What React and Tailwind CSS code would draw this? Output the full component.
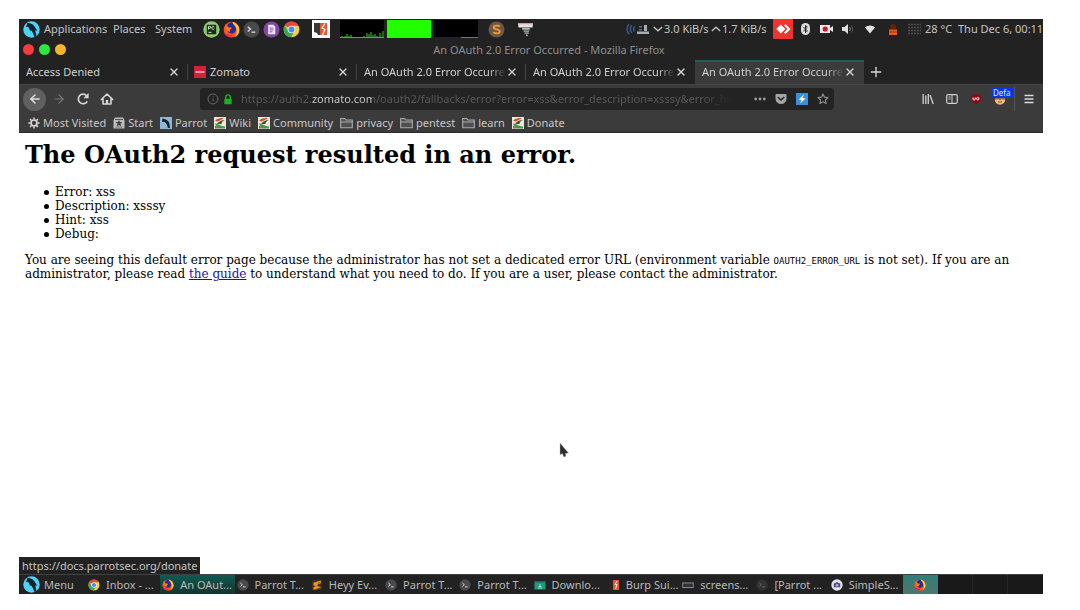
import React from "react";
import { ArrowLeft, ArrowRight, Bluetooth, Info, X, Plus } from "lucide-react";

const Parrot = ({ className }) => (
  <svg viewBox="0 0 18 18" className={className} aria-hidden="true">
    <circle cx="9" cy="9" r="8.7" fill="#4fd2f7" />
    <path d="M4.500 2C8.500 2 12 4 13.200 7.400l2 3-2.200-.6c.3 2 .8 4.200 1.400 6.200l-2.200 1C11 13.500 10 11 8.200 9.400L7.600 11C7.200 9 6.500 7.500 5.300 6L3 6.300C3.400 5 4.500 4 4.500 2Z" fill="#10222b" />
  </svg>
);

const PyCharm = ({ className }) => (
  <svg viewBox="0 0 18 18" className={className} aria-hidden="true">
    <circle cx="9" cy="9" r="8.700" fill="#8ccb6e" />
    <rect x="4" y="4" width="10" height="10" rx="1" fill="#1d2a1c" />
    <path d="M5.800 9V5.800h1.400a1 1 0 0 1 0 2H5.800M12 6.200c-1.800-1-3 .1-2.600 1.600.3 1.200 1.600 1.400 2.600.6M5.800 12H9" fill="none" stroke="#d9f2cf" strokeWidth="1" />
  </svg>
);

const Firefox = ({ className }) => (
  <svg viewBox="0 0 18 18" className={className} aria-hidden="true">
    <circle cx="9" cy="9.200" r="8.300" fill="#ff5420" />
    <path d="M9.500 1C13 .8 17.300 4.500 17.300 9.400c0 3.500-2 6.200-4.800 7.500 1.500-2 2.500-5 1.900-8-.5-2.600-2-3.600-3.200-5.200C10.300 2.700 9.700 1.800 9.500 1Z" fill="#ffc928" />
    <path d="M5 3.500C6.500 1.800 8.500 1.200 10 1.300c.3 2.200 3.500 3.700 3.800 7 .2 3-2 5-4.600 5C6.500 13.300 4.500 11.500 4.500 9c0-2 .3-3.500.5-5.500Z" fill="#252a9f" />
    <path d="M3 2.600C2.800 5 4 6.200 6 6.600l3.500.5-1 1.500C7.200 9 6.800 10.200 7.800 11c-1 .7-3 .3-4-1.500C2.500 7.500 2.200 4.500 3 2.600Z" fill="#ff7a1c" />
    <path d="M1 10.500c1.500 3.500 5 5 9.500 3.900-1.500 2-4 3-6.500 1.800C2.300 15 1.200 13 1 10.500Z" fill="#f21c48" />
  </svg>
);

const Terminal = ({ className }) => (
  <svg viewBox="0 0 18 18" className={className} aria-hidden="true">
    <circle cx="9" cy="9" r="8.500" fill="#4a4a4d" />
    <path d="M5 6l3 2.500L5 11" fill="none" stroke="#ddd" strokeWidth="1.400" />
    <path d="M9 11.800h4" stroke="#ddd" strokeWidth="1.400" />
  </svg>
);

const Notes = ({ className }) => (
  <svg viewBox="0 0 18 18" className={className} aria-hidden="true">
    <circle cx="9" cy="9" r="8.500" fill="#8148a5" />
    <path d="M5.500 4h5.500l2 2v8H5.500Z" fill="#efe6f5" />
    <path d="M7 7.500h4M7 9.500h4M7 11.500h3" stroke="#8148a5" />
  </svg>
);

const Chrome = ({ className }) => (
  <svg viewBox="0 0 18 18" className={className} aria-hidden="true">
    <circle cx="9" cy="9" r="8.300" fill="#f7cd3b" />
    <path d="M9 9 1.800 4.800A8.300 8.300 0 0 1 16.300 5H9Z" fill="#e2483b" />
    <path d="M1.800 4.800A8.300 8.300 0 0 0 8.600 17.300L12 11 5.600 10.500Z" fill="#3aa757" />
    <circle cx="9" cy="9" r="4" fill="#f2f2f2" />
    <circle cx="9" cy="9" r="3.100" fill="#4a8af4" />
  </svg>
);

const Burp = ({ className }) => (
  <svg viewBox="0 0 18 18" className={className} aria-hidden="true">
    <path fill="#fff" d="M0 0h18v18H0z" />
    <path fill="#3a3a3c" d="M2 3h6v12H6l-1-2-3-1Z" />
    <path fill="#e8552e" d="M8 3h7v12H8z" />
    <path d="M13 3.500 10 8l3 1.500L10.500 15" fill="none" stroke="#fff" strokeWidth="1.200" />
  </svg>
);

const BurpSmall = ({ className }) => (
  <svg viewBox="0 0 12 12" className={className} aria-hidden="true">
    <path fill="#2b2424" d="M1 1h5v10H1z" />
    <path fill="#f0502f" d="M5 1h6v10H5z" />
    <path d="M9 2 7 5.500h2L7.500 10" fill="none" stroke="#fff" strokeWidth="1" />
  </svg>
);

const SublimeRound = ({ className }) => (
  <svg viewBox="0 0 18 18" className={className} aria-hidden="true">
    <circle cx="9" cy="9" r="8.500" fill="#6c5846" />
    <path d="M12.600 5.800C11 4.500 6 4.300 6 6.800c0 2.600 6.500 1.600 6.500 4.300 0 2.600-5 2.300-6.900.8" fill="none" stroke="#f59a35" strokeWidth="1.900" />
  </svg>
);

const Sublime = ({ className }) => (
  <svg viewBox="0 0 12 12" className={className} aria-hidden="true">
    <rect x="1" y="1" width="10" height="10" rx="1" fill="#3b3026" />
    <path d="M9.500 1.800 2.800 4v2.300l6.700 2L2.800 10.500V8.300l3-1M9.500 1.800v2.300l-3.300 1" fill="#f7941d" stroke="#f7941d" strokeWidth=".6" />
  </svg>
);

const Tornado = ({ className }) => (
  <svg viewBox="0 0 18 18" className={className} aria-hidden="true">
    <path d="M1 2.500h16l-.6 4.500H1.600Z" fill="#e8e4e4" />
    <path d="M1 3h16" stroke="#d09a96" />
    <path d="M5.500 7.500h8v1.700h-8ZM7 10h6v1.500H7ZM8 12.300h4.500v1.300H8ZM9.500 14.500h2v1.300h-2Z" fill="#b9b9b9" />
  </svg>
);

const Graph = ({ kind }) => (
  <svg viewBox="0 0 44 18" className="h-[18px] w-11 shrink-0" aria-hidden="true">
    <path fill={kind === "mem" ? "#22ff00" : "#000"} d="M0 0h44v18H0z" />
    {kind === "cpu" && (
      <>
        <path d="M0 17.500h44" stroke="#2bc31c" />
        <path d="M2 18v-2M5 18v-2M7 18v-4M9 18v-2M11 18v-3M14 18v-1M24 18v-2M27 18v-5M29 18v-4M31 18v-6M33 18v-3M35 18v-4M37 18v-2M40 18v-5M43 18v-7" stroke="#35d421" />
      </>
    )}
    {kind === "net" && (
      <>
        <path d="M0 17.500h27" stroke="#17176f" />
        <path d="M27 17.500h17" stroke="#77794e" />
        <path d="M1 0v18" stroke="#10104a" />
      </>
    )}
  </svg>
);

const NetIcon = () => (
  <svg viewBox="0 0 24 14" className="h-3.5 w-6 shrink-0" aria-hidden="true">
    <g fill="none" stroke="#2f5f96" strokeWidth="1.400">
      <path d="M3 2C.6 5 .6 9 3 12M5.800 3.200c-1.800 2.300-1.800 5.300 0 7.600M8.400 4.500c-1 1.500-1 3.500 0 5" />
    </g>
    <path d="M11 9.500h12V12H11zM18 3h3v6h-3z" fill="#a9adb0" />
    <path d="M13 4h3v1.500h-3zM13 7h3v1.500h-3z" fill="#5b6f85" />
  </svg>
);

const Chevron = ({ up }) => (
  <svg viewBox="0 0 10 6" className="mx-px h-1.5 w-2.5 shrink-0" aria-hidden="true">
    <path d={up ? "M.8 5 5 1.200 9.200 5" : "M.8 1 5 4.800 9.200 1"} fill="none" stroke="#c4c4c4" strokeWidth="1.300" />
  </svg>
);

const AnyDesk = () => (
  <svg viewBox="0 0 20 20" className="size-5 shrink-0" aria-hidden="true">
    <path fill="#ef3430" d="M0 0h20v20H0z" />
    <path fill="#fff" d="M7.800 5.500 12.300 10l-4.500 4.500L3.300 10ZM11 6.500 12.500 5l5 5-5 5L11 13.500 14.500 10Z" />
  </svg>
);

const BluetoothPill = () => (
  <span className="flex h-3 w-[9px] items-center justify-center rounded-full bg-[#dcdcdc]">
    <Bluetooth className="size-2.5 text-[#222]" strokeWidth={2.5} />
  </span>
);

const Camera = () => (
  <svg viewBox="0 0 14 12" className="h-3 w-3.5 shrink-0" aria-hidden="true">
    <path d="M0 2h10v3l3-2v6l-3-2v3H0Z" fill="#e8e8e8" />
    <circle cx="5.200" cy="6" r="2.600" fill="#d1122b" />
  </svg>
);

const Speaker = () => (
  <svg viewBox="0 0 12 12" className="size-3 shrink-0" aria-hidden="true">
    <path d="M0 4h2.500L6 1v10L2.500 8H0Z" fill="#e0e0e0" />
    <path d="M7.500 4c1 1.200 1 2.800 0 4" fill="none" stroke="#8a8a8a" />
    <path d="M9.300 2.500c1.800 2 1.800 5 0 7" fill="none" stroke="#555" />
  </svg>
);

const WifiFan = () => (
  <svg viewBox="0 0 12 10" className="h-2.5 w-3 shrink-0" aria-hidden="true">
    <path d="M1 3.500C3.500.8 8.500.8 11 3.500L6 9.500Z" fill="#e2e2e2" />
  </svg>
);

const Battery = () => (
  <svg viewBox="0 0 10 12" className="h-3 w-2.5 shrink-0" aria-hidden="true">
    <path d="M3 1h4v1.500h1V6H2V2.500h1Z" fill="#5a2410" />
    <path d="M1 6.500h8V12H1Z" fill="#ea5a12" />
    <path d="M1 9h8" stroke="#a33a0a" />
  </svg>
);

const Haze = () => (
  <svg viewBox="0 0 13 12" className="h-3 w-[13px] shrink-0" aria-hidden="true">
    <path d="M0 1.500h13M0 4.500h13M0 7.500h13M0 10.500h13" stroke="#505050" strokeWidth="1.500" strokeDasharray="2 1" />
  </svg>
);

const Reload = () => (
  <svg viewBox="0 0 14 14" className="size-3.5" aria-hidden="true">
    <path d="M11.300 9.300A4.800 4.800 0 1 1 10.600 3.600" fill="none" stroke="#d6d6d6" strokeWidth="1.700" />
    <path d="M12.600 1v5.200H7.400Z" fill="#d6d6d6" />
  </svg>
);

const HomeIcon = () => (
  <svg viewBox="0 0 14 14" className="size-3.5" aria-hidden="true">
    <path d="M1.300 7.500 7 2l5.700 5.500M3 6.500V12h8V6.500" fill="none" stroke="#d6d6d6" strokeWidth="1.600" strokeLinejoin="round" strokeLinecap="round" />
    <path d="M5.800 8h2.400v4H5.800Z" fill="#d6d6d6" />
  </svg>
);

const LockIcon = () => (
  <svg viewBox="0 0 10 12" className="h-[11px] w-2.5 shrink-0" aria-hidden="true">
    <path d="M2.500 6V3.500a2.500 2.500 0 0 1 5 0V6" fill="none" stroke="#17b51d" strokeWidth="1.500" />
    <rect x="1" y="5.300" width="8" height="6" rx=".8" fill="#17b51d" />
  </svg>
);

const Dots = () => (
  <svg viewBox="0 0 12 4" className="h-1 w-3" aria-hidden="true">
    <g fill="#9a9a9a"><circle cx="1.700" cy="2" r="1.400" /><circle cx="6" cy="2" r="1.400" /><circle cx="10.300" cy="2" r="1.400" /></g>
  </svg>
);

const Pocket = () => (
  <svg viewBox="0 0 12 12" className="size-3" aria-hidden="true">
    <path d="M1.500 1h9a1 1 0 0 1 1 1v3.500a5.500 5.500 0 0 1-11 0V2a1 1 0 0 1 1-1Z" fill="#a4a4a4" />
    <path d="M3.300 4.500 6 7l2.700-2.500" fill="none" stroke="#242424" strokeWidth="1.600" strokeLinecap="round" />
  </svg>
);

const Bolt = () => (
  <svg viewBox="0 0 12 12" className="size-3" aria-hidden="true">
    <path fill="#3d8fdb" d="M0 0h12v12H0z" />
    <path d="M7.800 1.500 2.500 6.700h3L4.200 10.500 9.700 5.200H6.500Z" fill="#fff" />
  </svg>
);

const StarIcon = () => (
  <svg viewBox="0 0 12 12" className="size-3" aria-hidden="true">
    <path d="m6 1 1.500 3.200 3.500.4-2.600 2.400.7 3.500L6 8.800l-3.100 1.700.7-3.500L1 4.600l3.500-.4Z" fill="none" stroke="#8d8d8d" strokeWidth="1.200" strokeLinejoin="round" />
  </svg>
);

const Library = () => (
  <svg viewBox="0 0 12 12" className="size-3" aria-hidden="true">
    <path d="M1.200 1v10M3.800 2.500V11M6.300 1v10M8 2l3.200 9" fill="none" stroke="#d0d0d0" strokeWidth="1.300" />
  </svg>
);

const Sidebar = () => (
  <svg viewBox="0 0 12 12" className="size-3" aria-hidden="true">
    <rect x=".7" y="1.700" width="10.600" height="8.600" rx="1.500" fill="none" stroke="#d0d0d0" strokeWidth="1.200" />
    <path d="M6 2v8M2.500 4h2M2.500 6h2" stroke="#d0d0d0" />
  </svg>
);

const Ublock = () => (
  <svg viewBox="0 0 12 12" className="size-3" aria-hidden="true">
    <path d="M6 .8 10.500 2.500 11.200 6C10.500 8.800 8.500 10.300 6 11.200 3.500 10.300 1.500 8.800.8 6L1.500 2.500Z" fill="#8d0a12" />
    <path d="M3 4.500v1.600c0 1.300 2.200 1.300 2.200 0V4.500" fill="none" stroke="#fff" strokeWidth="1" />
    <circle cx="7.800" cy="5.700" r="1.200" fill="none" stroke="#fff" strokeWidth="1" />
  </svg>
);

const Monkey = () => (
  <svg viewBox="0 0 14 14" className="size-3.5" aria-hidden="true">
    <circle cx="7" cy="7" r="5.500" fill="#8a6542" />
    <path d="M2 8c1-1 3-1 5 0 2-1 4-1 5 0 0 2.800-2.500 4.500-5 4.500S2 10.800 2 8Z" fill="#e9bd83" />
    <path d="M5 9.500c1.200 1 2.800 1 4 0" fill="none" stroke="#6b3f24" strokeWidth=".8" />
  </svg>
);

const Burger = () => (
  <svg viewBox="0 0 10 10" className="size-2.5" aria-hidden="true">
    <path d="M.5 1.500h9M.5 5h9M.5 8.500h9" stroke="#dcdcdc" strokeWidth="1.300" />
  </svg>
);

const Gear = ({ className }) => (
  <svg viewBox="0 0 12 12" className={className} aria-hidden="true">
    <circle cx="6" cy="6" r="3" fill="none" stroke="#d8d8d8" strokeWidth="1.700" />
    <path d="M6 .4v2M6 9.600v2M.4 6h2M9.600 6h2M2 2l1.500 1.500M8.500 8.500 10 10M2 10l1.500-1.500M8.500 3.500 10 2" stroke="#d8d8d8" strokeWidth="1.500" />
  </svg>
);

const StartIcon = ({ className }) => (
  <svg viewBox="0 0 12 12" className={className} aria-hidden="true">
    <path d="M2 .5h8L11.500 3v8.500H.5V3Z" fill="#bdbdbd" />
    <path d="M2 2.500h8" stroke="#555" />
    <path d="M6 3.800l.8 1.500 1.900.2-1.400 1.300.4 1.900L6 7.800l-1.700.9.4-1.900-1.400-1.300 1.900-.2ZM2.500 10h7" fill="#3e3e3e" stroke="#3e3e3e" strokeWidth=".6" />
  </svg>
);

const ParrotSquare = ({ className }) => (
  <svg viewBox="0 0 12 12" className={className} aria-hidden="true">
    <path fill="#8db7d5" d="M0 0h12v12H0z" />
    <path d="M2.500 1.500c3 .2 6 2 6.800 4.500l.7 5H7.800C7.500 8.500 6.500 6.500 4.800 5L2 4.700Z" fill="#17232c" />
  </svg>
);

const Feather = ({ className }) => (
  <svg viewBox="0 0 12 12" className={className} aria-hidden="true">
    <path fill="#ece7d8" d="M0 0h12v12H0z" />
    <path d="M1 4C3 1.500 6 .8 10 1.200 8 2 6 3 4 4.500Z" fill="#d0502c" />
    <path d="M3 7C5 4.500 7.500 3 11 3 8.500 4 7.500 5 7.500 7Z" fill="#474b2c" />
    <path d="M1 6.500c3 0 4.500 2.500 10 3v2H3.500Z" fill="#3d9a50" />
    <path d="M1 8.500c1.500.5 2 1.500 2.500 3H1Z" fill="#d0502c" />
  </svg>
);

const Folder = ({ className }) => (
  <svg viewBox="0 0 13 12" className={className} aria-hidden="true">
    <path d="M.7 10.800V1.500h4l1.300 1.500h6.300v7.800Z" fill="#4f4f4f" stroke="#ababab" strokeWidth="1.100" />
    <path d="M.7 5h11.600" stroke="#ababab" />
  </svg>
);

const Downloads = ({ className }) => (
  <svg viewBox="0 0 12 12" className={className} aria-hidden="true">
    <path d="M.5 2h11v8.500H.5Z" fill="#1d9c7c" />
    <path d="M.5 2h11v1.500H.5Z" fill="#0e6f57" />
    <path d="M6 5v3M4.500 7.500h3M4 9h4" stroke="#bfe9dd" strokeWidth=".8" />
  </svg>
);

const Recorder = ({ className }) => (
  <svg viewBox="0 0 12 12" className={className} aria-hidden="true">
    <rect x=".8" y="4" width="10.400" height="4.500" fill="#262626" stroke="#8f8f8f" />
    <path d="M3 6.300h6" stroke="#4d4d4d" />
  </svg>
);

const SimpleRec = ({ className }) => (
  <svg viewBox="0 0 12 12" className={className} aria-hidden="true">
    <circle cx="6" cy="6" r="5.700" fill="#e3e3ee" />
    <path d="M2.800 4.300h1.500l.7-1h2l.7 1h1.500v4H2.800Z" fill="#4b4b86" />
    <circle cx="6" cy="6.200" r="1.200" fill="#b9b9df" />
  </svg>
);

const ZomatoIcon = () => (
  <svg viewBox="0 0 12 12" className="size-3 shrink-0" aria-hidden="true">
    <path fill="#d5203a" d="M0 0h12v12H0z" />
    <path d="M1.500 6h9" stroke="#f6c9d0" strokeWidth="1.400" />
  </svg>
);

const launchers = [
  ["PyCharm", PyCharm],
  ["Firefox", Firefox],
  ["Terminal", Terminal],
  ["Notes", Notes],
  ["Chrome", Chrome],
];

function TopPanel() {
  return (
    <header className="flex h-5 items-center bg-[#222] text-[#c4c4c4]">
      <nav className="flex items-center pl-1">
        <Parrot className="mr-1 size-[17px]" />
        <button className="w-[69px] text-left">Applications</button>
        <button className="w-[42px] text-left">Places</button>
        <button className="w-12 text-left">System</button>
      </nav>
      <div className="flex items-center gap-[3px]">
        {launchers.map(([name, Icon]) => (
          <button key={name} aria-label={name}><Icon className="size-[17px]" /></button>
        ))}
      </div>
      <button aria-label="Burp Suite" className="ml-3"><Burp className="size-[18px]" /></button>
      <div className="ml-2.5 flex gap-[3px]">
        <Graph kind="cpu" />
        <Graph kind="mem" />
        <Graph kind="net" />
      </div>
      <button aria-label="Sublime Text" className="ml-2.5"><SublimeRound className="size-[17px]" /></button>
      <button aria-label="Tornado" className="ml-3"><Tornado className="size-[17px]" /></button>
      <div className="ml-auto flex items-center whitespace-nowrap">
        <NetIcon />
        <span className="ml-0.5"><Chevron /></span>
        <span className="w-[46px]">3.0 KiB/s</span>
        <Chevron up />
        <span className="w-[51px]">1.7 KiB/s</span>
        <AnyDesk />
        <div className="ml-2 flex items-center">
          <BluetoothPill />
        </div>
        <div className="ml-2.5 flex items-center gap-2">
          <Camera />
          <Speaker />
        </div>
        <div className="ml-2.5 flex items-center gap-3">
          <WifiFan />
          <Battery />
        </div>
        <div className="ml-2.5 flex items-center gap-1">
          <Haze />
          <span className="w-[33px]">28 °C</span>
        </div>
        <time className="w-[85px]">Thu Dec 6, 00:11</time>
      </div>
    </header>
  );
}

const tabs = [
  { title: "Access Denied" },
  { title: "Zomato", icon: true },
  { title: "An OAuth 2.0 Error Occurred", long: true },
  { title: "An OAuth 2.0 Error Occurred", long: true },
  { title: "An OAuth 2.0 Error Occurred", long: true, active: true },
];

function TabStrip() {
  return (
    <div role="tablist" className="flex h-6 bg-[#222]">
      {tabs.map((tab, i) => (
        <div
          key={i}
          className={
            tab.active
              ? "flex min-w-0 max-w-[169px] flex-1 items-center border-t-2 border-[#1f5f56] bg-[#3b3b3b] pr-2 pb-0.5 pl-[7px]"
              : "flex min-w-0 max-w-[169px] flex-1 items-center pr-2 pl-[7px]"
          }
        >
          {tab.icon && <span className="mr-1 -ml-px"><ZomatoIcon /></span>}
          <button
            role="tab"
            aria-selected={!!tab.active}
            className={
              tab.long
                ? "min-w-0 flex-1 overflow-hidden text-left whitespace-nowrap text-[#d0d0d0] [mask-image:linear-gradient(to_right,#000_88%,transparent)]"
                : "min-w-0 flex-1 overflow-hidden text-left whitespace-nowrap text-[#d0d0d0]"
            }
          >
            {tab.title}
          </button>
          <button aria-label="Close tab" className="text-[#d0d0d0]"><X className="size-3" strokeWidth={2.8} /></button>
          {i < 3 && <span className="-mr-2 ml-[7px] h-4 w-px bg-[#444]" />}
        </div>
      ))}
      <button aria-label="New tab" className="px-1 text-[#d8d8d8]"><Plus className="size-4" /></button>
    </div>
  );
}

function Toolbar() {
  return (
    <div className="flex h-[29px] items-center border-t border-[#454545] bg-[#3b3b3b] pl-1">
      <button aria-label="Back" className="flex size-[23px] items-center justify-center rounded-full bg-[#606060] text-[#e0e0e0]"><ArrowLeft className="size-3.5" strokeWidth={2.5} /></button>
      <button aria-label="Forward" className="ml-1.5 text-[#777]"><ArrowRight className="size-3.5" /></button>
      <button aria-label="Reload" className="ml-2.5"><Reload /></button>
      <button aria-label="Home" className="ml-2.5"><HomeIcon /></button>
      <div className="ml-[86px] flex h-[22px] min-w-0 flex-1 items-center rounded-sm bg-[#232323] pr-[5px] pl-[7px]">
        <Info className="size-3 shrink-0 text-[#6a6a6a]" />
        <span className="ml-1 flex"><LockIcon /></span>
        <input
          aria-label="Address"
          readOnly
          value="https://auth2.zomato.com/oauth2/fallbacks/error?error=xss&error_description=xsssy&error_hint=xss"
          className="ml-2 min-w-0 flex-1 bg-[linear-gradient(to_right,#5a5a5a_71px,#d0d0d0_71px,#d0d0d0_131px,#5a5a5a_131px,#5a5a5a_460px,transparent_492px)] bg-clip-text text-transparent outline-none"
        />
        <div className="ml-3 flex items-center gap-[9px]">
          <button aria-label="Page actions"><Dots /></button>
          <button aria-label="Pocket"><Pocket /></button>
          <button aria-label="Lightning"><Bolt /></button>
          <button aria-label="Bookmark"><StarIcon /></button>
        </div>
      </div>
      <div className="ml-[88px] flex items-center gap-3">
        <button aria-label="Library"><Library /></button>
        <button aria-label="Sidebar"><Sidebar /></button>
        <button aria-label="uBlock"><Ublock /></button>
        <button aria-label="Greasemonkey profile" className="relative -ml-px">
          <Monkey />
          <span className="absolute -top-1 -left-0.5 bg-[#0b37dc] px-0.5 text-[8px] leading-[10px] text-[#dfe6ff]">Defa</span>
        </button>
      </div>
      <span className="ml-[7px] h-6 w-px bg-[#565656]" />
      <button aria-label="Menu" className="px-[9px]"><Burger /></button>
    </div>
  );
}

const bookmarks = [
  ["Most Visited", Gear],
  ["Start", StartIcon],
  ["Parrot", ParrotSquare],
  ["Wiki", Feather],
  ["Community", Feather],
  ["privacy", Folder],
  ["pentest", Folder],
  ["learn", Folder],
  ["Donate", Feather],
];

function BookmarksBar() {
  return (
    <nav className="flex h-5 items-center gap-[7px] border-b border-[#2a2a2a] bg-[#3b3b3b] pl-[9px] text-[#c8c8c8]">
      {bookmarks.map(([name, Icon]) => (
        <a key={name} href="#" className="flex items-center gap-[3px] whitespace-nowrap">
          <Icon className={Icon === Folder ? "h-3 w-[13px]" : "size-3"} />
          {name}
        </a>
      ))}
    </nav>
  );
}

const details = ["Error: xss", "Description: xsssy", "Hint: xss", "Debug:"];

function ErrorPage() {
  return (
    <main className="relative flex flex-1 flex-col bg-white px-1.5 pt-[7px] text-[12px] leading-[14px] text-black [font-family:'DejaVu_Serif',serif]">
      <h1 className="text-[24px] leading-[30px] font-bold">The OAuth2 request resulted in an error.</h1>
      <ul className="mt-[15px] pl-[19px]">
        {details.map((line) => (
          <li key={line} className="flex items-center gap-1.5">
            <span className="size-[5px] rounded-full bg-black" />
            {line}
          </li>
        ))}
      </ul>
      <p className="mt-3">
        You are seeing this default error page because the administrator has not set a dedicated error URL (environment variable{" "}
        <code className="text-[9px] leading-none [font-family:'DejaVu_Sans_Mono',monospace]">OAUTH2_ERROR_URL</code> is not set). If you are an
        administrator, please read <a href="#" className="text-[#1a0dab] underline">the guide</a> to understand what you need to do. If you are a user, please contact the administrator.
      </p>
      <svg viewBox="0 0 10 16" className="absolute top-[309px] left-[540px] h-4 w-2.5" aria-hidden="true">
        <path d="M1 1v12l2.300-1.500L4.800 15 7 14.200 6.500 11.500l3-.5Z" fill="#2f2f2f" stroke="#bbb" strokeWidth=".4" />
      </svg>
      <div className="mt-auto -ml-1.5 self-start bg-[#222] px-[3px] text-[11px] leading-[17px] text-[#c4c4c4] [font-family:'Noto_Sans',sans-serif]">
        https://docs.parrotsec.org/donate
      </div>
    </main>
  );
}

const tasks = [
  ["Inbox - ...", Chrome],
  ["An OAut...", Firefox, "active"],
  ["Parrot T...", Terminal],
  ["Heyy Ev...", Sublime],
  ["Parrot T...", Terminal],
  ["Parrot T...", Terminal],
  ["Downlo...", Downloads],
  ["Burp Sui...", BurpSmall],
  ["screens...", Recorder],
  ["[Parrot ...", Terminal, "dim"],
  ["SimpleS...", SimpleRec],
];

function Taskbar() {
  return (
    <footer className="flex h-5 items-stretch border-t border-[#3c4542] bg-[#222] text-[#b9b9b9]">
      <button className="flex w-[67px] items-center gap-1 pl-1"><Parrot className="size-[17px]" />Menu</button>
      {tasks.map(([name, Icon, state], i) => (
        <button
          key={i}
          className={
            state === "active"
              ? "flex min-w-0 flex-1 items-center gap-1.5 bg-gradient-to-b from-[#0e5a51] to-[#12352f] pl-0.5 whitespace-nowrap"
              : "flex min-w-0 flex-1 items-center gap-1.5 pl-0.5 whitespace-nowrap"
          }
        >
          <Icon className={state === "dim" ? "size-3 shrink-0 opacity-40" : "size-3 shrink-0"} />
          {name}
        </button>
      ))}
      <button aria-label="Workspace 1" className="flex w-[35px] items-center justify-center bg-gradient-to-b from-[#2d7f76] to-[#4d7771]"><Firefox className="size-3" /></button>
      <button aria-label="Workspace 2" className="w-[35px] border-r border-[#262626] bg-[#191919]" />
      <button aria-label="Workspace 3" className="w-[35px] border-r border-[#262626] bg-[#191919]" />
      <button aria-label="Workspace 4" className="w-[35px] bg-[#191919]" />
    </footer>
  );
}

export default function App() {
  return (
    <div className="flex min-h-screen flex-col bg-white pt-[19px] pr-[37px] pb-4 pl-[19px] text-[11px] leading-4 [font-family:'Noto_Sans',sans-serif]">
      <TopPanel />
      <div className="flex h-[21px] items-center justify-between bg-[#222] pl-1 text-[#8f8f8f]">
        <div className="flex w-11 gap-[5px]">
          <button aria-label="Close" className="size-[11px] rounded-full bg-[#f23c42]" />
          <button aria-label="Maximize" className="size-[11px] rounded-full bg-[#2be83b]" />
          <button aria-label="Minimize" className="size-[11px] rounded-full bg-[#f5b52e]" />
        </div>
        <span>An OAuth 2.0 Error Occurred - Mozilla Firefox</span>
        <span className="w-3" />
      </div>
      <TabStrip />
      <Toolbar />
      <BookmarksBar />
      <ErrorPage />
      <Taskbar />
    </div>
  );
}
